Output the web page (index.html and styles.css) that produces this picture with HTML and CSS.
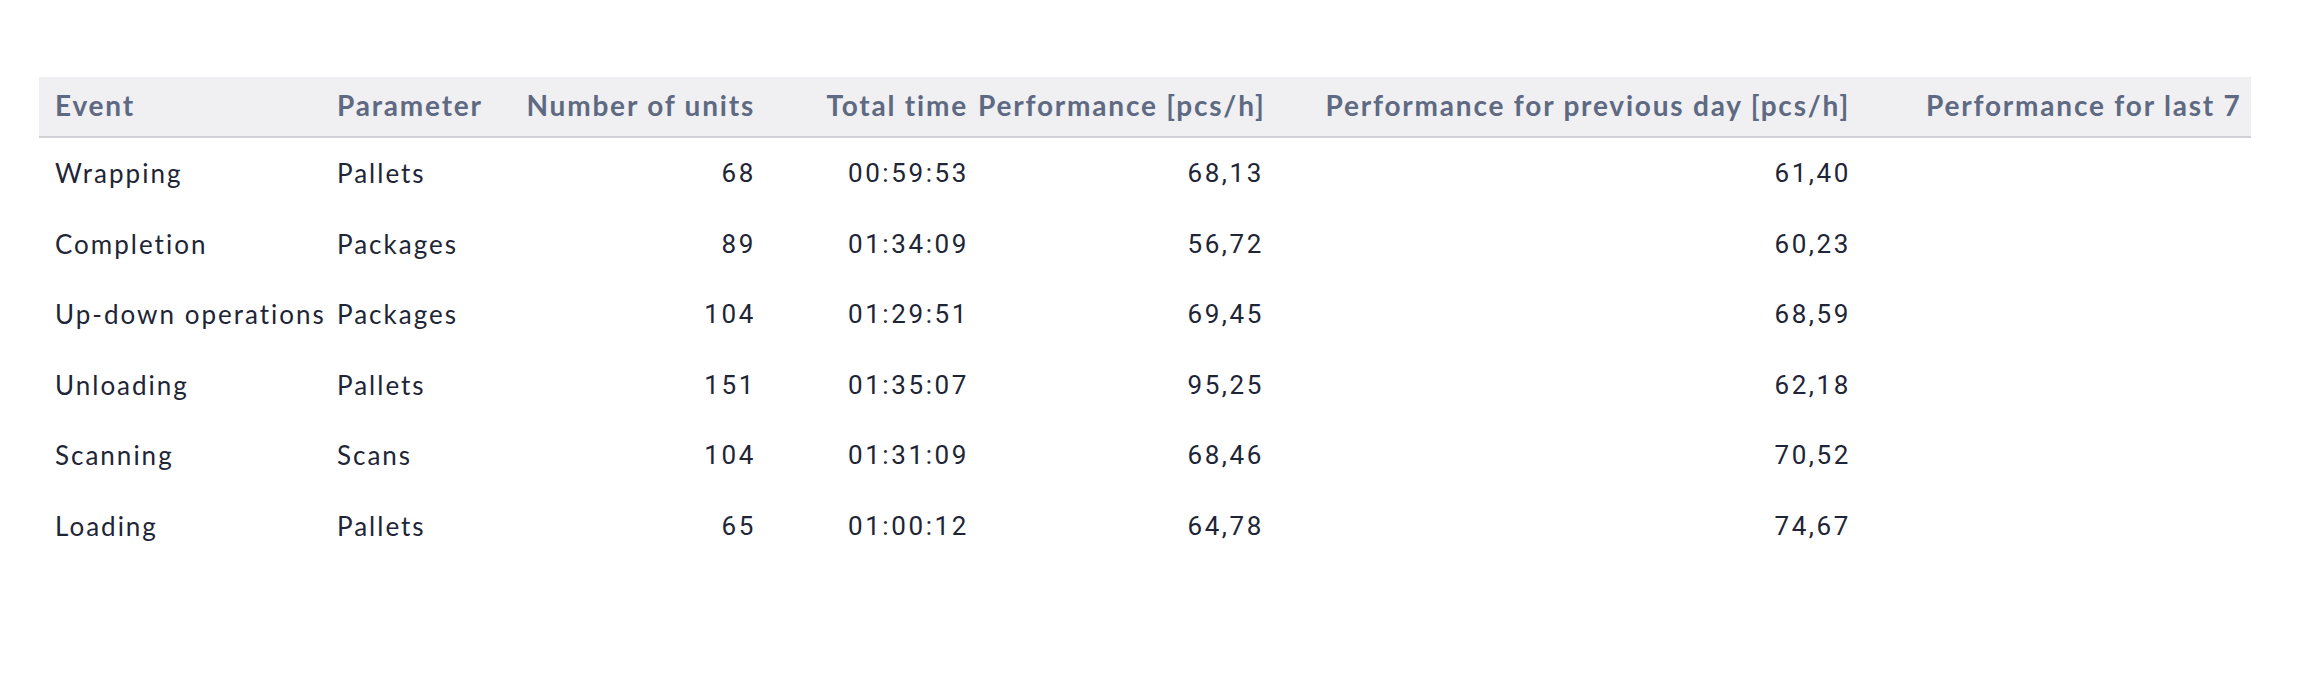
FILE: index.html
```html
<!DOCTYPE html>
<html lang="en">
<head>
<meta charset="utf-8">
<title>Performance table</title>
<link rel="stylesheet" href="styles.css">
</head>
<body>
<div class="wrap">
  <table class="perf">
    <colgroup>
      <col class="c-event">
      <col class="c-param">
      <col class="c-units">
      <col class="c-time">
      <col class="c-perf">
      <col class="c-prev">
      <col class="c-week">
    </colgroup>
    <thead>
      <tr>
        <th class="first">Event</th>
        <th>Parameter</th>
        <th class="num">Number of units</th>
        <th class="num">Total time</th>
        <th class="num">Performance [pcs/h]</th>
        <th class="num">Performance for previous day [pcs/h]</th>
        <th class="week">Performance for last 7 days [pcs/h]</th>
      </tr>
    </thead>
    <tbody>
      <tr><td class="first">Wrapping</td><td>Pallets</td><td class="num">68</td><td class="num">00:59:53</td><td class="num">68,13</td><td class="num">61,40</td><td></td></tr>
      <tr><td class="first">Completion</td><td>Packages</td><td class="num">89</td><td class="num">01:34:09</td><td class="num">56,72</td><td class="num">60,23</td><td></td></tr>
      <tr><td class="first">Up-down operations</td><td>Packages</td><td class="num">104</td><td class="num">01:29:51</td><td class="num">69,45</td><td class="num">68,59</td><td></td></tr>
      <tr><td class="first">Unloading</td><td>Pallets</td><td class="num">151</td><td class="num">01:35:07</td><td class="num">95,25</td><td class="num">62,18</td><td></td></tr>
      <tr><td class="first">Scanning</td><td>Scans</td><td class="num">104</td><td class="num">01:31:09</td><td class="num">68,46</td><td class="num">70,52</td><td></td></tr>
      <tr><td class="first">Loading</td><td>Pallets</td><td class="num">65</td><td class="num">01:00:12</td><td class="num">64,78</td><td class="num">74,67</td><td></td></tr>
    </tbody>
  </table>
</div>
</body>
</html>
```

FILE: styles.css
```css
html, body {
  margin: 0;
  padding: 0;
  background: #ffffff;
}

body {
  padding: 77px 0 0 39px;
  font-family: Lato, "Liberation Sans", sans-serif;
}

.wrap {
  width: 2212px;
  overflow: hidden;
}

.perf {
  border-collapse: collapse;
  border-spacing: 0;
  table-layout: fixed;
  width: 2500px;
}

.c-event { width: 292px; }
.c-param { width: 184px; }
.c-units { width: 244px; }
.c-time  { width: 213px; }
.c-perf  { width: 295px; }
.c-prev  { width: 587px; }
.c-week  { width: 685px; }

.perf th {
  background: #f0f0f3;
  color: #5e6982;
  font-weight: 700;
  font-size: 28px;
  line-height: 34px;
  letter-spacing: 1.8px;
  height: 56px;
  padding: 0 6px 3px;
  text-align: left;
  white-space: nowrap;
  vertical-align: middle;
  border-bottom: 2px solid #cfd1d6;
}

.perf td {
  color: #1e2536;
  font-size: 26px;
  line-height: 30px;
  letter-spacing: 2px;
  padding: 20px 6px 20.5px;
  white-space: nowrap;
  text-align: left;
}

.perf .first {
  padding-left: 16px;
}

.perf .num {
  text-align: right;
}

.perf th.num {
  padding-right: 4px;
}

.perf td.num {
  font-family: Roboto, "Liberation Sans", sans-serif;
  font-size: 26px;
  letter-spacing: 2.6px;
  padding-right: 3px;
}

.perf th.week {
  padding-left: 72px;
  overflow: hidden;
}
```
